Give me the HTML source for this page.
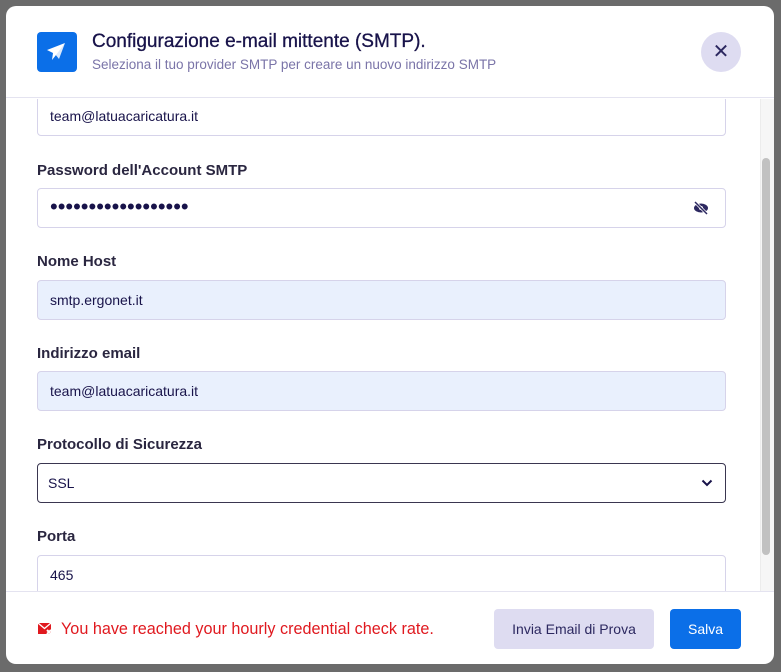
<!DOCTYPE html>
<html><head><meta charset="utf-8"><style>
*{box-sizing:border-box;margin:0;padding:0}
body{width:781px;height:672px;background:#6b6b6b;font-family:"Liberation Sans",sans-serif;position:relative;overflow:hidden}
.modal{position:absolute;left:6px;top:6px;width:768px;height:658px;background:#fff;border-radius:10px;overflow:hidden}
.hdr{position:absolute;left:0;top:0;width:768px;height:92px;border-bottom:1px solid #e4e3f0}
.logo{position:absolute;left:31px;top:26px;width:40px;height:40px;background:#0b6fe8;border-radius:4px}
.title{position:absolute;left:86px;top:25px;font-size:19px;color:#18134a;-webkit-text-stroke:0.3px #18134a}
.sub{position:absolute;left:86px;top:51px;font-size:13.5px;color:#7a74a8}
.close{position:absolute;left:695px;top:26px;width:40px;height:40px;border-radius:50%;background:#dedcf1;color:#2c2860;font-size:20px;text-align:center;line-height:40px}
.body{position:absolute;left:0;top:93px;width:768px;height:492px;overflow:hidden}
.inp{position:absolute;left:31px;width:689px;height:40px;border:1px solid #d6d3ea;border-radius:4px;font-size:14px;color:#18134a;padding-left:12px;line-height:38px}
.blue{background:#e9f0fd}
.lbl{position:absolute;left:31px;font-size:15px;font-weight:bold;color:#2a2640}
.sb{position:absolute;left:754px;top:0;width:14px;height:492px;background:#f6f6f6;border-left:1px solid #ececec}
.thumb{position:absolute;left:756px;top:59px;width:8px;height:397px;background:#c1c1c1;border-radius:4px}
.ftr{position:absolute;left:0;top:585px;width:768px;height:73px;border-top:1px solid #e4e3f0}
.err{position:absolute;left:55px;top:28px;font-size:16.2px;color:#e0191f}
.b1{position:absolute;left:488px;top:17px;width:160px;height:40px;background:#dedcf1;border-radius:4px;color:#2c2860;font-size:14px;text-align:center;line-height:40px}
.b2{position:absolute;left:664px;top:17px;width:71px;height:40px;background:#0b6fe8;border-radius:4px;color:#fff;font-size:14px;text-align:center;line-height:40px}
</style></head><body>
<div class="modal">
<div class="hdr">
<div class="logo"><svg width="40" height="40" viewBox="0 0 40 40"><path d="M28 11 L10 18 L16 21 L15 28 L19 23 Z" fill="#fff"/><path d="M28 11 L18 22 L22 27 Z" fill="#fff" opacity=".85"/></svg></div>
<div class="title">Configurazione e-mail mittente (SMTP).</div>
<div class="sub">Seleziona il tuo provider SMTP per creare un nuovo indirizzo SMTP</div>
<div class="close">✕</div>
</div>
<div class="body">
<div class="inp" style="top:-3px">team@latuacaricatura.it</div>
<div class="lbl" style="top:63px">Password dell'Account SMTP</div>
<div class="inp" style="top:89px"><span style="font-size:22px;letter-spacing:0;line-height:36px">••••••••••••••••••</span><svg style="position:absolute;right:16px;top:12px" width="16" height="14" viewBox="0 0 16 14"><ellipse cx="8" cy="7" rx="7" ry="4.5" fill="#2c2860"/><circle cx="8" cy="7" r="2" fill="#fff"/><path d="M2 1 L14 13" stroke="#fff" stroke-width="3"/><path d="M2 1 L14 13" stroke="#2c2860" stroke-width="1.5"/></svg></div>
<div class="lbl" style="top:154px">Nome Host</div>
<div class="inp blue" style="top:181px">smtp.ergonet.it</div>
<div class="lbl" style="top:246px">Indirizzo email</div>
<div class="inp blue" style="top:272px">team@latuacaricatura.it</div>
<div class="lbl" style="top:337px">Protocollo di Sicurezza</div>
<div class="inp" style="top:364px;border-color:#3a3650;padding-left:10px">SSL<svg style="position:absolute;right:12px;top:15px" width="12" height="8" viewBox="0 0 12 8"><path d="M1.5 1.5 L6 6 L10.5 1.5" stroke="#18134a" stroke-width="2" fill="none"/></svg></div>
<div class="lbl" style="top:429px">Porta</div>
<div class="inp" style="top:456px">465</div>
<div class="sb"></div><div class="thumb"></div>
</div>
<div class="ftr">
<svg style="position:absolute;left:32px;top:30px" width="15" height="14" viewBox="0 0 15 14"><rect x="0" y="1" width="13" height="11" fill="#e0191f"/><path d="M0 1 L6.5 6.5 L13 1" stroke="#fff" stroke-width="1.3" fill="none"/><path d="M9 8 L13 12 M13 8 L9 12" stroke="#fff" stroke-width="2"/></svg>
<div class="err">You have reached your hourly credential check rate.</div>
<div class="b1">Invia Email di Prova</div>
<div class="b2">Salva</div>
</div>
</div>
</body></html>
